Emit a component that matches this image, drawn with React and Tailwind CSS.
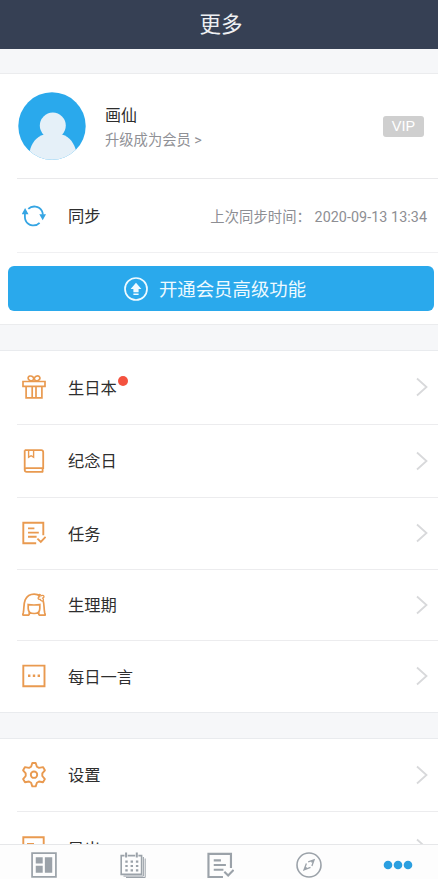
import React from "react";

const base = {
  viewBox: "0 0 24 24",
  fill: "none",
  stroke: "currentColor",
  strokeWidth: 1.9,
};

const SyncIcon = () => (
  <svg {...base} strokeWidth="1.8" className="w-6 h-6 text-[#35a5e3]">
    <path d="M6.3 4.9C10 1.3 17.2 1.6 20 7.2c.5 1.1.8 2.2.8 3.6M17.6 18.8c-3.9 4-11.3 3.4-13.9-2.2-.5-1.1-.8-2.2-.8-3.6v-3" />
    <path d="M-.2 10.2 3.1 4 6.5 10.2zM17.3 10.2H24l-3.3 6z" fill="currentColor" stroke="none" />
  </svg>
);

const GiftIcon = () => (
  <svg {...base} strokeWidth="1.7" className="w-6 h-6">
    <path d="M1 6.5h22v4.9H1zM4.1 11.4v11.5h15.8V11.4M10.2 11.4v11.5M14 11.4v11.5" />
    <ellipse cx="8.9" cy="3.4" rx="2.8" ry="2.3" transform="rotate(25 8.9 3.4)" />
    <ellipse cx="15.1" cy="3.4" rx="2.8" ry="2.3" transform="rotate(-25 15.1 3.4)" />
  </svg>
);

const BookIcon = () => (
  <svg {...base} strokeWidth="1.8" className="w-6 h-6">
    <path d="M2.7 1.2h16.5q2 0 2 2v15.9H4.5q-1.8 0-1.8 1.9V1.2M2.7 20.8q0 2.1 2 2.1h16.5M20.6 19.1v3.8" />
    <path d="M6.6 1.2v7l2.5-1.5 2.5 1.5v-7" strokeWidth="1.4" />
  </svg>
);

const TaskIcon = ({ className = "w-6 h-6" }) => (
  <svg {...base} className={className}>
    <path d="M14.2 22.2H1.3V1.7h20v12.6M15.4 17.6l3.4 3.3 4.8-5M6 7.4h6.4M6 11.6h10.8M6 15.8h8.6" />
  </svg>
);

const GirlIcon = () => (
  <svg {...base} strokeWidth="1.7" className="w-6 h-6">
    <path d="M7.2 22.2H1.3c-.9 0-.4-1.1 0-2.5C2.3 15.500 1.3 11.400 3.2 6.9 5.2 2.600 8.600 1.200 12.100 1.200c2 0 4.200.5 6 1.900M21.100 7.400c1.400 4.600.6 8.200 1.600 12.300.4 1.300.9 2.500.1 2.500h-6" />
    <path d="M6.2 11.600c3.500.5 8.100.5 11.600 0v3.800c0 3.200-2.200 5.100-5.700 5.100s-5.900-1.900-5.900-5.100zM7.200 18.800v3.400M16.800 18.800v3.400" />
    <path d="M16.4 1.7c1.3-.7 2.2-.2 2.7 1 1.2-.7 2.7-.4 2.900.8.1.8-.7 1.400-1.300 1.700 1 .9.9 2.200.1 2.700-1 .5-2-.3-2.500-1.400-1.300.1-2.200-.6-2.200-1.400 0-.7.6-1.100 1.300-1.300-.8-.6-1.300-1.500-1-2.100z" strokeWidth="1.3" />
  </svg>
);

const QuoteIcon = () => (
  <svg {...base} className="w-6 h-6">
    <path d="M1.3 1.6h21.2v20.6H1.3z" />
    <path d="M6 10.600h2.400V13H6zM10.800 10.600h2.400V13h-2.400zM15.600 10.600H18V13h-2.400z" fill="currentColor" stroke="none" />
  </svg>
);

const GearIcon = () => (
  <svg {...base} strokeLinejoin="round" className="w-6 h-6 overflow-visible">
    <path d="M10.3 0h3.4l1.2 3.7 2.1 1.2 4-.8 1.9 3.2-2.6 3.1v2.6l2.6 3.1-1.9 3.2-4-.8-2.1 1.2-1.2 3.7h-3.4l-1.2-3.7L7 18.5l-4 .8-1.9-3.2L3.7 13v-2.6L1.1 7.3 3 4.1l4 .8 2.1-1.2z" />
    <circle cx="12" cy="11.7" r="3.2" />
  </svg>
);

const ExportIcon = () => (
  <svg {...base} className="w-6 h-6">
    <path d="M1.3 1.3h20.4v21H1.3zM5 8h7M6 12.5h10" />
  </svg>
);

const BoardIcon = () => (
  <svg {...base} className="w-[26px] h-[26px]">
    <path d="M1 1h22v22H1z" strokeWidth="1.6" />
    <path d="M4.4 4.8h6.4v5.8H4.4zM4.4 12.8h6.4v6.4H4.4zM12.8 4.8h6.8v14.4h-6.8z" fill="currentColor" stroke="none" />
  </svg>
);

const CalendarIcon = () => (
  <svg viewBox="0 0 26 26" fill="none" stroke="currentColor" strokeWidth="1.6" className="w-[26px] h-[26px]">
    <path d="M4.5 3.6H1.2v18.8h20.4V3.6h-3.2M7.7 3.6h7.5" />
    <path d="M6.1 .5v5.1M16.8 .5v5.1" strokeWidth="2" />
    <path d="M23.4 5v19.1H3.5M25.2 6.5v19H6" strokeWidth="1" />
    <path d="M5.3 9.6h13M5.3 14h13M5.3 18.4h13" strokeWidth="2.2" strokeDasharray="2.4 2.9" />
  </svg>
);

const CompassIcon = () => (
  <svg viewBox="0 0 26 26" fill="none" stroke="currentColor" strokeWidth="1.6" className="w-[26px] h-[26px]">
    <circle cx="13" cy="13" r="12" />
    <path d="M10.4 11.4 8 17.8l6.5-2.4M12.2 9.8l5.9-2-2.2 6.2M8 17.8l2.5-2.5M18.1 7.8l-2.6 2.6" strokeWidth="1.3" />
  </svg>
);

const MoreIcon = () => (
  <svg viewBox="0 0 30 10" fill="currentColor" className="w-[30px] h-[10px] text-[#2b9fe0]">
    <circle cx="5" cy="5" r="4.3" />
    <circle cx="15" cy="5" r="4.3" />
    <circle cx="25" cy="5" r="4.3" />
  </svg>
);

const Chevron = () => (
  <svg viewBox="0 0 12 20" fill="none" stroke="#d8d9db" strokeWidth="1.8" className="w-3 h-5">
    <path d="M1 1.5 10.5 10 1 18.5" />
  </svg>
);

const Row = ({ icon, label, height, dot, last }) => (
  <div className={`flex ${height}`}>
    <div className={`ml-[17px] pl-[5px] pr-[10px] pb-px flex-1 flex items-center ${last ? "" : "border-b border-[#ececee]"}`}>
      <span className="w-6 mr-[22px] text-[#e99a50]">{icon}</span>
      <span className="pt-[4px] text-[16.3px] text-[#2e2e2e]">{label}</span>
      {dot && <span className="w-[10px] h-[10px] ml-[1px] mb-[12px] rounded-full bg-[#f4523f]" />}
      <span className="ml-auto"><Chevron /></span>
    </div>
  </div>
);

const tabs = [BoardIcon, CalendarIcon, TaskIcon, CompassIcon, MoreIcon];

export default function App() {
  return (
    <div className="w-[438px] h-[879px] flex flex-col overflow-hidden bg-[#f6f7f9] font-[Roboto,'Noto_Sans_CJK_SC',sans-serif] leading-none whitespace-nowrap">
      <header className="h-[49px] shrink-0 pl-[4px] flex items-center justify-center bg-[#364054] text-[21.5px] text-[#eef0f3]">
        更多
      </header>

      <main className="flex-1 min-h-0 overflow-hidden pt-6">
        {/* Account */}
        <section className="h-[252px] bg-white border-y border-[#ebecee]">
          <div className="h-[105px] ml-[17px] pr-[14px] flex items-center border-b border-[#e9e9eb]">
            <svg viewBox="0 0 68 68" className="w-[68px] h-[68px] ml-px">
              <defs>
                <clipPath id="avatar"><circle cx="34" cy="34" r="33.7" /></clipPath>
              </defs>
              <g clipPath="url(#avatar)">
                <path d="M0 0h68v68H0z" fill="#2aa9ec" />
                <circle cx="34.8" cy="33.6" r="13" fill="#e5f0f8" />
                <path d="M26 42.500C18 45 13.500 51 11.500 60v8h47v-8C56 51 52 45 44 42.500z" fill="#e5f0f8" />
              </g>
            </svg>
            <div className="pt-[4px] ml-[19px] flex flex-col gap-[9px]">
              <div className="text-[16px] text-[#2e2e2e]">画仙</div>
              <div className="text-[14.3px] text-[#909196]">升级成为会员 &gt;</div>
            </div>
            <div className="ml-auto w-[41px] h-[21px] rounded-[3px] bg-[#cfcfcf] text-white text-[14.5px] font-['Liberation_Sans',sans-serif] flex items-center justify-center">
              VIP
            </div>
          </div>

          <div className="h-[74px] ml-[17px] pl-[5px] pr-[11px] flex items-center border-b border-[#f0f0f2]">
            <SyncIcon />
            <span className="pt-[4px] ml-[22px] text-[16.3px] text-[#2e2e2e]">同步</span>
            <span className="pt-[3px] ml-auto text-[14.3px] tracking-[0.07px] text-[#8d8e93]">上次同步时间： 2020-09-13 13:34</span>
          </div>

          <button className="mt-[13px] ml-2 w-[426px] h-[45px] pr-[12px] rounded-md bg-[#2aa9ec] text-[#eefaff] text-[18.4px] flex items-center justify-center gap-[11px]">
            <svg viewBox="0 0 24 24" fill="none" stroke="currentColor" strokeWidth="1.7" className="w-6 h-6">
              <circle cx="12" cy="12" r="11" />
              <path d="M12 5.8 17.4 12H14.6v3.2H9.4V12H6.6zM9.4 16.5h5.2V18H9.4z" fill="currentColor" stroke="none" />
            </svg>
            <span className="pt-[3px]">开通会员高级功能</span>
          </button>
        </section>

        {/* Features */}
        <section className="mt-[25px] bg-white border-y border-[#e9ebee]">
          <Row icon={<GiftIcon />} label="生日本" height="h-[74px]" dot />
          <Row icon={<BookIcon />} label="纪念日" height="h-[73px]" />
          <Row icon={<TaskIcon />} label="任务" height="h-[72px]" />
          <Row icon={<GirlIcon />} label="生理期" height="h-[71px]" />
          <Row icon={<QuoteIcon />} label="每日一言" height="h-[71px]" last />
        </section>

        {/* Settings */}
        <section className="mt-[25px] bg-white border-t border-[#e9ebee]">
          <Row icon={<GearIcon />} label="设置" height="h-[73px]" />
          <Row icon={<ExportIcon />} label="导出" height="h-[73px]" last />
        </section>
      </main>

      <nav className="h-[35px] shrink-0 -mr-[4px] pt-[6px] grid grid-cols-5 bg-[#fdfdfd] border-t border-[#e6e7e9] text-[#9ba2a9]">
        {tabs.map((Tab, i) => (
          <div key={i} className="h-[28px] flex items-center justify-center">
            <Tab className="w-[27px] h-[27px]" />
          </div>
        ))}
      </nav>
    </div>
  );
}
